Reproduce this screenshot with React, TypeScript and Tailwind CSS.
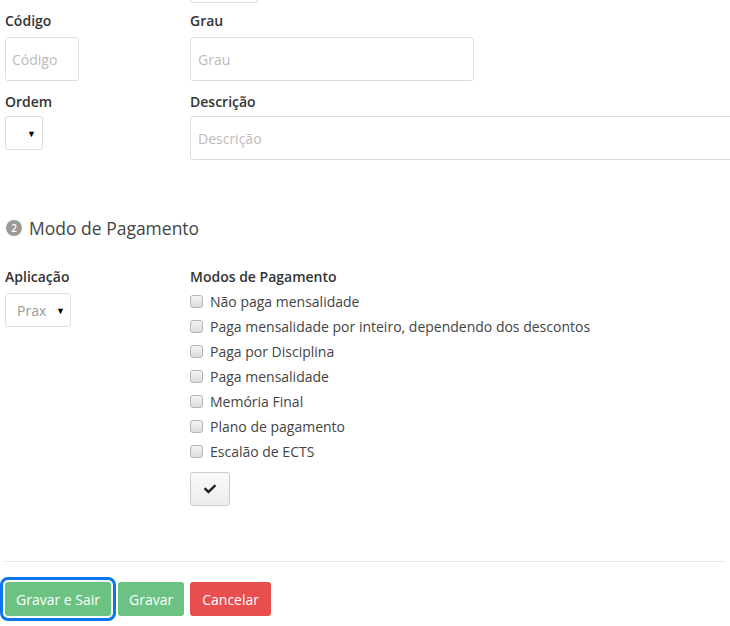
import { FaCheck } from "react-icons/fa";

const modos: string[] = [
  "Não paga mensalidade",
  "Paga mensalidade por inteiro, dependendo dos descontos",
  "Paga por Disciplina",
  "Paga mensalidade",
  "Memória Final",
  "Plano de pagamento",
  "Escalão de ECTS",
];

function Caret() {
  return <span className="text-[9px] leading-none text-black">▼</span>;
}

function Checkbox() {
  return (
    <span className="inline-block h-[13px] w-[13px] shrink-0 rounded-[3px] border border-[#b5b5b5] bg-gradient-to-b from-[#f4f4f4] to-[#dcdcdc]" />
  );
}

export default function App() {
  return (
    <div
      className="relative h-[626px] w-[730px] overflow-hidden bg-white text-[14px] text-[#333]"
      style={{ fontFamily: '"Open Sans", sans-serif' }}
    >
      <div className="ml-[190px] h-[3px] w-[68px] rounded-b border-x border-b border-[#ddd]" />

      <div className="mt-[8px] flex px-[5px]">
        <div className="w-[185px] shrink-0">
          <label className="block h-[20px] font-semibold leading-[20px]">Código</label>
          <div className="mt-[6px] flex h-[44px] w-[74px] items-center rounded-[3px] border border-[#ddd] px-[6px] text-[#bbb]">
            Código
          </div>
          <label className="mt-[11px] block h-[20px] font-semibold leading-[20px]">Ordem</label>
          <div className="mt-[4px] flex h-[34px] w-[38px] items-center justify-end rounded-[3px] border border-[#ddd] pr-[6px]">
            <Caret />
          </div>
        </div>
        <div className="w-[600px] shrink-0">
          <label className="block h-[20px] font-semibold leading-[20px]">Grau</label>
          <div className="mt-[6px] flex h-[44px] w-[284px] items-center rounded-[3px] border border-[#ddd] px-[7px] text-[#bbb]">
            Grau
          </div>
          <label className="mt-[11px] block h-[20px] font-semibold leading-[20px]">Descrição</label>
          <div className="mt-[4px] flex h-[44px] w-[600px] items-center rounded-[3px] border border-[#ddd] px-[7px] text-[#bbb]">
            Descrição
          </div>
        </div>
      </div>

      <div className="mt-[55px] flex items-center gap-[7px] px-[6px]">
        <span className="flex h-[16px] w-[16px] items-center justify-center rounded-full bg-[#9a9a9a] text-[10px] font-semibold leading-none text-white">
          2
        </span>
        <h2 className="text-[17.5px] leading-[26px] text-[#444]">Modo de Pagamento</h2>
      </div>

      <div className="mt-[26px] flex px-[5px]">
        <div className="w-[185px] shrink-0">
          <label className="block h-[20px] font-semibold leading-[20px]">Aplicação</label>
          <div className="mt-[6px] flex h-[34px] w-[66px] items-center justify-between rounded-[3px] border border-[#ddd] pl-[11px] pr-[5px]">
            <span className="text-[#999]">Prax</span>
            <Caret />
          </div>
        </div>
        <div className="flex-1">
          <label className="block h-[20px] font-semibold leading-[20px]">Modos de Pagamento</label>
          <ul className="mt-[2px] flex flex-col">
            {modos.map((m) => (
              <li key={m} className="flex h-[25px] items-center gap-[7px]">
                <Checkbox />
                <span className="leading-[20px] text-[#444]">{m}</span>
              </li>
            ))}
          </ul>
          <button className="mt-[8px] flex h-[34px] w-[40px] items-center justify-center rounded-[3px] border border-[#ccc] bg-gradient-to-b from-[#fafafa] to-[#ececec] text-[#222]">
            <FaCheck size={12} />
          </button>
        </div>
      </div>

      <div className="mx-[5px] mt-[55px] border-t border-[#e5e5e5]" />

      <div className="mt-[20px] flex items-center gap-[6px] px-[5px]">
        <button className="h-[34px] rounded-[3px] bg-[#6cc282] px-[11px] text-white outline-[3px] outline-offset-[2px] outline-[#0a76f0] outline-solid">
          Gravar e Sair
        </button>
        <button className="ml-[1px] h-[34px] rounded-[3px] bg-[#6cc282] px-[11px] text-white">Gravar</button>
        <button className="h-[34px] rounded-[3px] bg-[#e84e4e] px-[12px] text-white">Cancelar</button>
      </div>
    </div>
  );
}
